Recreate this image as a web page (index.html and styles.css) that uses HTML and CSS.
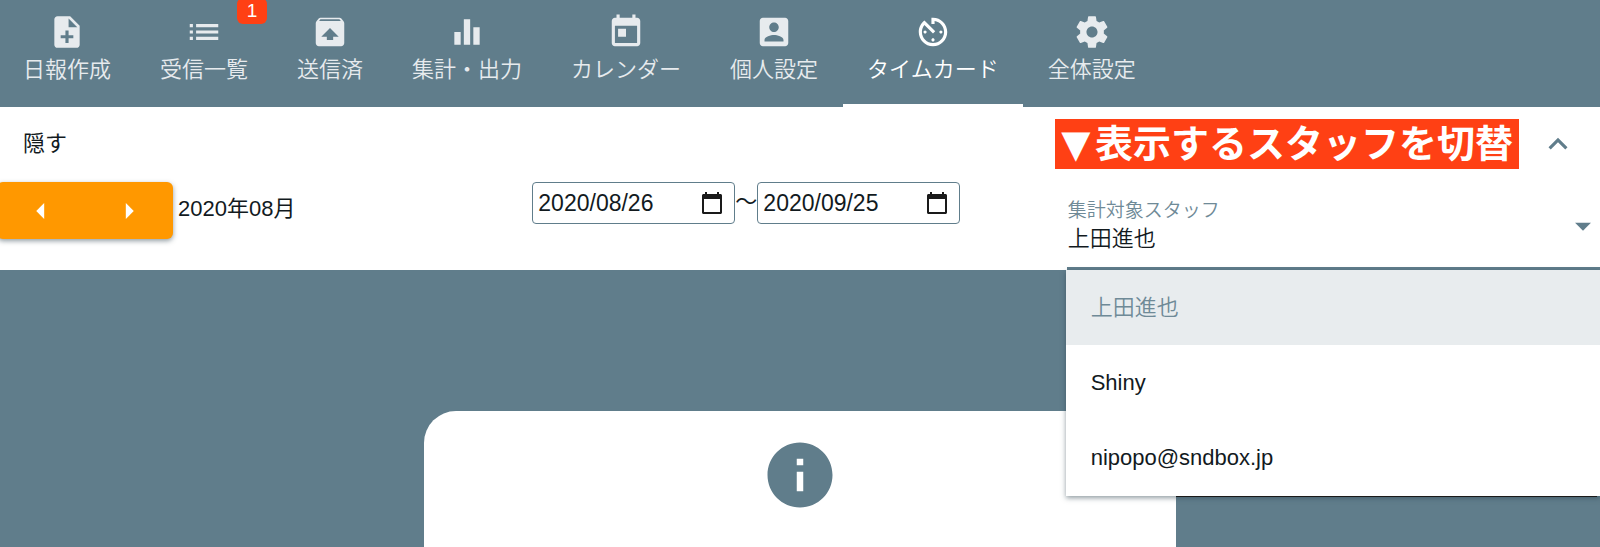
FILE: index.html
```html
<!DOCTYPE html>
<html lang="ja">
<head>
<meta charset="utf-8">
<meta name="viewport" content="width=device-width, initial-scale=1">
<title>タイムカード</title>
<link rel="stylesheet" href="styles.css">
</head>
<body>
<nav class="tabs">
  <a class="tab" href="#report">
    <svg class="icon" viewBox="0 0 24 24" aria-hidden="true"><path d="M14 2H6c-1.1 0-1.99.9-1.99 2L4 20c0 1.1.89 2 1.99 2H18c1.1 0 2-.9 2-2V8l-6-6zm2 14h-3v3h-2v-3H8v-2h3v-3h2v3h3v2zm-3-7V3.5L18.5 9H13z"/></svg>
    <span>日報作成</span>
  </a>
  <a class="tab" href="#inbox">
    <svg class="icon" viewBox="0 0 24 24" aria-hidden="true"><path d="M3 13h2v-2H3v2zm0 4h2v-2H3v2zm0-8h2V7H3v2zm4 4h14v-2H7v2zm0 4h14v-2H7v2zM7 7v2h14V7H7z"/></svg>
    <span>受信一覧</span>
    <span class="badge">1</span>
  </a>
  <a class="tab" href="#sent">
    <svg class="icon" viewBox="0 0 24 24" aria-hidden="true"><path d="M20.55 5.22l-1.39-1.68C18.88 3.21 18.47 3 18 3H6c-.47 0-.88.21-1.15.55L3.46 5.22C3.17 5.57 3 6.01 3 6.5V19c0 1.1.89 2 2 2h14c1.1 0 2-.9 2-2V6.5c0-.49-.17-.93-.45-1.28zM12 9.5l5.5 5.5H14v2h-4v-2H6.5L12 9.5zM5.12 5l.82-1h12l.93 1H5.12z"/></svg>
    <span>送信済</span>
  </a>
  <a class="tab" href="#summary">
    <svg class="icon" viewBox="0 0 24 24" aria-hidden="true"><path d="M10 20h4V4h-4v16zm-6 0h4v-8H4v8zM16 9v11h4V9h-4z"/></svg>
    <span>集計・出力</span>
  </a>
  <a class="tab" href="#calendar">
    <svg class="icon" viewBox="0 0 24 24" aria-hidden="true"><path d="M19 3h-1V1h-2v2H8V1H6v2H5c-1.11 0-1.99.9-1.99 2L3 19c0 1.1.89 2 2 2h14c1.1 0 2-.9 2-2V5c0-1.1-.9-2-2-2zm0 16H5V8h14v11zM7 10h5v5H7z"/></svg>
    <span>カレンダー</span>
  </a>
  <a class="tab" href="#personal">
    <svg class="icon" viewBox="0 0 24 24" aria-hidden="true"><path d="M3 5v14c0 1.1.89 2 2 2h14c1.1 0 2-.9 2-2V5c0-1.1-.9-2-2-2H5c-1.11 0-2 .9-2 2zm12 4c0 1.66-1.34 3-3 3s-3-1.34-3-3 1.34-3 3-3 3 1.34 3 3zm-9 8c0-2 4-3.1 6-3.1s6 1.1 6 3.1v1H6v-1z"/></svg>
    <span>個人設定</span>
  </a>
  <a class="tab tab-active" href="#timecard" aria-current="page">
    <svg class="icon" viewBox="0 0 24 24" aria-hidden="true"><path d="M11 17c0 .55.45 1 1 1s1-.45 1-1-.45-1-1-1-1 .45-1 1zm0-14v4h2V5.08c3.39.49 6 3.39 6 6.92 0 3.87-3.13 7-7 7s-7-3.13-7-7c0-1.68.59-3.22 1.58-4.42L12 13l1.41-1.41-6.8-6.8v.02C4.42 6.45 3 9.05 3 12c0 4.97 4.02 9 9 9 4.97 0 9-4.03 9-9s-4.03-9-9-9h-1zm7 9c0-.55-.45-1-1-1s-1 .45-1 1 .45 1 1 1 1-.45 1-1zM6 12c0 .55.45 1 1 1s1-.45 1-1-.45-1-1-1-1 .45-1 1z"/></svg>
    <span>タイムカード</span>
  </a>
  <a class="tab" href="#settings">
    <svg class="icon" viewBox="0 0 24 24" aria-hidden="true"><path d="M19.43 12.98c.04-.32.07-.64.07-.98s-.03-.66-.07-.98l2.11-1.65c.19-.15.24-.42.12-.64l-2-3.46c-.12-.22-.39-.3-.61-.22l-2.49 1c-.52-.4-1.08-.73-1.69-.98l-.38-2.65C14.46 2.18 14.25 2 14 2h-4c-.25 0-.46.18-.49.42l-.38 2.65c-.61.25-1.17.59-1.69.98l-2.49-1c-.23-.09-.49 0-.61.22l-2 3.46c-.13.22-.07.49.12.64l2.11 1.65c-.04.32-.07.65-.07.98s.03.66.07.98l-2.11 1.65c-.19.15-.24.42-.12.64l2 3.46c.12.22.39.3.61.22l2.49-1c.52.4 1.08.73 1.69.98l.38 2.65c.03.24.24.42.49.42h4c.25 0 .46-.18.49-.42l.38-2.65c.61-.25 1.17-.59 1.69-.98l2.49 1c.23.09.49 0 .61-.22l2-3.46c.12-.22.07-.49-.12-.64l-2.11-1.65zM12 15.5c-1.93 0-3.5-1.57-3.5-3.5s1.57-3.5 3.5-3.5 3.5 1.57 3.5 3.5-1.57 3.5-3.5 3.5z"/></svg>
    <span>全体設定</span>
  </a>
</nav>

<section class="panel">
  <button class="panel-toggle" type="button" aria-expanded="true">
    <span>隠す</span>
    <strong class="callout"><span class="callout-mark">▼</span>表示するスタッフを切替</strong>
    <svg class="icon chevron" viewBox="0 0 24 24" aria-hidden="true"><path d="M12 8l-6 6 1.41 1.41L12 10.83l4.59 4.58L18 14z"/></svg>
  </button>

  <div class="filters">
    <div class="month">
      <div class="month-buttons">
        <button class="month-button" type="button" aria-label="前の月"><svg class="icon" viewBox="0 0 24 24" aria-hidden="true"><path d="M14 7l-5 5 5 5V7z"/></svg></button>
        <button class="month-button" type="button" aria-label="次の月"><svg class="icon" viewBox="0 0 24 24" aria-hidden="true"><path d="M10 17l5-5-5-5v10z"/></svg></button>
      </div>
      <span class="month-name">2020年08月</span>
    </div>

    <div class="period">
      <div class="date-box">
        <input class="date-input" type="text" value="2020/08/26" aria-label="開始日">
        <button class="date-picker" type="button" aria-label="開始日を選択"><svg viewBox="0 0 24 24" aria-hidden="true"><path d="M20.500 3H19V1h-2v2H7V1H5v2H3.500C2.700 3 2 3.700 2 4.500v17c0 .8.7 1.500 1.500 1.500h17c.8 0 1.500-.7 1.500-1.500v-17C22 3.700 21.300 3 20.500 3zM20 21H4V8h16v13z"/></svg></button>
      </div>
      <span>〜</span>
      <div class="date-box">
        <input class="date-input" type="text" value="2020/09/25" aria-label="終了日">
        <button class="date-picker" type="button" aria-label="終了日を選択"><svg viewBox="0 0 24 24" aria-hidden="true"><path d="M20.500 3H19V1h-2v2H7V1H5v2H3.500C2.700 3 2 3.700 2 4.500v17c0 .8.7 1.500 1.500 1.500h17c.8 0 1.500-.7 1.500-1.500v-17C22 3.700 21.300 3 20.500 3zM20 21H4V8h16v13z"/></svg></button>
      </div>
    </div>

    <div class="staff">
      <label class="staff-label" for="staff">集計対象スタッフ</label>
      <select class="staff-select" id="staff">
        <option selected>上田進也</option>
        <option>Shiny</option>
        <option>nipopo@sndbox.jp</option>
      </select>
      <svg class="icon staff-arrow" viewBox="0 0 24 24" aria-hidden="true"><path d="M7 10l5 5 5-5z"/></svg>
      <ul class="menu" role="listbox" aria-label="集計対象スタッフ">
        <li class="menu-item menu-item-selected" role="option" aria-selected="true">上田進也</li>
        <li class="menu-item" role="option" aria-selected="false">Shiny</li>
        <li class="menu-item" role="option" aria-selected="false">nipopo@sndbox.jp</li>
      </ul>
    </div>
  </div>
</section>

<main class="content">
  <div class="card">
    <svg class="info" viewBox="0 0 24 24" role="img" aria-label="情報"><path d="M12 2C6.480 2 2 6.480 2 12s4.480 10 10 10 10-4.480 10-10S17.520 2 12 2zm1 15h-2v-6h2v6zm0-8h-2V7h2v2z"/></svg>
  </div>
</main>
</body>
</html>
```
FILE: styles.css
```css
* {
  box-sizing: border-box;
}

body {
  display: flex;
  flex-direction: column;
  min-height: 100vh;
  margin: 0;
  overflow-x: hidden;
  background: #607d8b;
  color: #121a1e;
  font: 22px/32px "Liberation Sans", "Noto Sans CJK JP", sans-serif;
}

button,
input,
select {
  font: inherit;
  color: inherit;
}

button {
  padding: 0;
  border: 0;
  background: none;
}

.icon {
  display: block;
  width: 38px;
  height: 38px;
  fill: currentColor;
}

/* Tabs */
.tabs {
  display: flex;
  gap: 1px;
  margin-left: -1px;
}

.tab {
  position: relative;
  display: flex;
  flex-direction: column;
  gap: 3px;
  align-items: center;
  padding: 13px 24px 18px;
  border-bottom: 3px solid transparent;
  color: #e7ebee;
  font-weight: 350;
  text-decoration: none;
  white-space: nowrap;
}

.tab-active {
  border-bottom-color: #fff;
  color: #fff;
}

.badge {
  position: absolute;
  top: -2px;
  right: 5px;
  width: 30px;
  border-radius: 6px;
  background: #ff4014;
  color: #fff;
  font-size: 19px;
  line-height: 26px;
  text-align: center;
}

/* Filter panel */
.panel {
  background: #fff;
}

.panel-toggle {
  display: flex;
  align-items: center;
  width: 100%;
  padding: 12px 23px 13px;
  text-align: left;
}

.callout {
  margin-left: auto;
  padding: 0 6px 0 2px;
  background: #ff4014;
  color: #fff;
  font-size: 38px;
  line-height: 50px;
}

.callout-mark {
  display: inline-block;
  width: 38px;
  font-family: "DejaVu Sans", sans-serif;
  line-height: 38px;
  text-align: center;
}

.chevron {
  margin-left: 20px;
  color: #607d8b;
}

.filters {
  display: grid;
  grid-template-columns: repeat(3, 1fr);
}

.month,
.period {
  display: flex;
  align-items: flex-start;
}

.month-buttons {
  display: flex;
  margin-left: -3px;
  border-radius: 6px;
  background: #ff9800;
  box-shadow: 0 2px 5px rgba(38, 60, 72, 0.5);
  color: #fff;
}

.month-button {
  display: grid;
  place-items: center;
  width: 88px;
  height: 57px;
}

.month-name {
  padding: 11px 5px;
}

.period {
  margin-left: -1px;
  line-height: 40px;
}

.date-box {
  display: flex;
  align-items: center;
  width: 203px;
  height: 42px;
  padding: 0 10px 0 5px;
  border: 1px solid #607d8b;
  border-radius: 4px;
}

.date-input {
  flex: 1;
  min-width: 0;
  padding: 0;
  border: 0;
  background: none;
  font-size: 23px;
}

.date-picker svg {
  display: block;
  width: 24px;
  height: 24px;
  fill: #1a1a1a;
}

.staff {
  position: relative;
  display: flex;
  flex-direction: column;
  padding: 16px 0 12px 1px;
  border-bottom: 3px solid #607d8b;
}

.staff-label {
  color: #6f8a97;
  font-size: 19px;
  font-weight: 350;
  line-height: 25px;
}

.staff-select {
  height: 32px;
  padding: 0;
  border: 0;
  appearance: none;
  background: none;
  font-weight: 350;
}

.staff-arrow {
  position: absolute;
  top: 25px;
  right: -2px;
  color: #607d8b;
  pointer-events: none;
}

.menu {
  position: absolute;
  top: 88px;
  right: 0;
  left: -1px;
  z-index: 1;
  margin: 0;
  padding: 0 0 1px;
  background: #fff;
  box-shadow: 0 2px 5px rgba(38, 60, 72, 0.5);
  list-style: none;
}

.menu::after {
  position: absolute;
  top: 100%;
  right: 3px;
  left: 110px;
  border-top: 1px solid #1a1a1a;
  content: "";
}

.menu-item {
  padding: 22px 25px 21px;
}

.menu-item-selected {
  background: #e8ecee;
  color: #6f8a97;
  font-weight: 350;
}

/* Message card */
.content {
  display: flex;
  flex: 1;
  justify-content: center;
  padding-top: 141px;
}

.card {
  width: 47%;
  padding-top: 25px;
  border-radius: 32px 32px 0 0;
  background: #fff;
}

.info {
  display: block;
  width: 78px;
  height: 78px;
  margin: 0 auto;
  fill: #607d8b;
}
```
